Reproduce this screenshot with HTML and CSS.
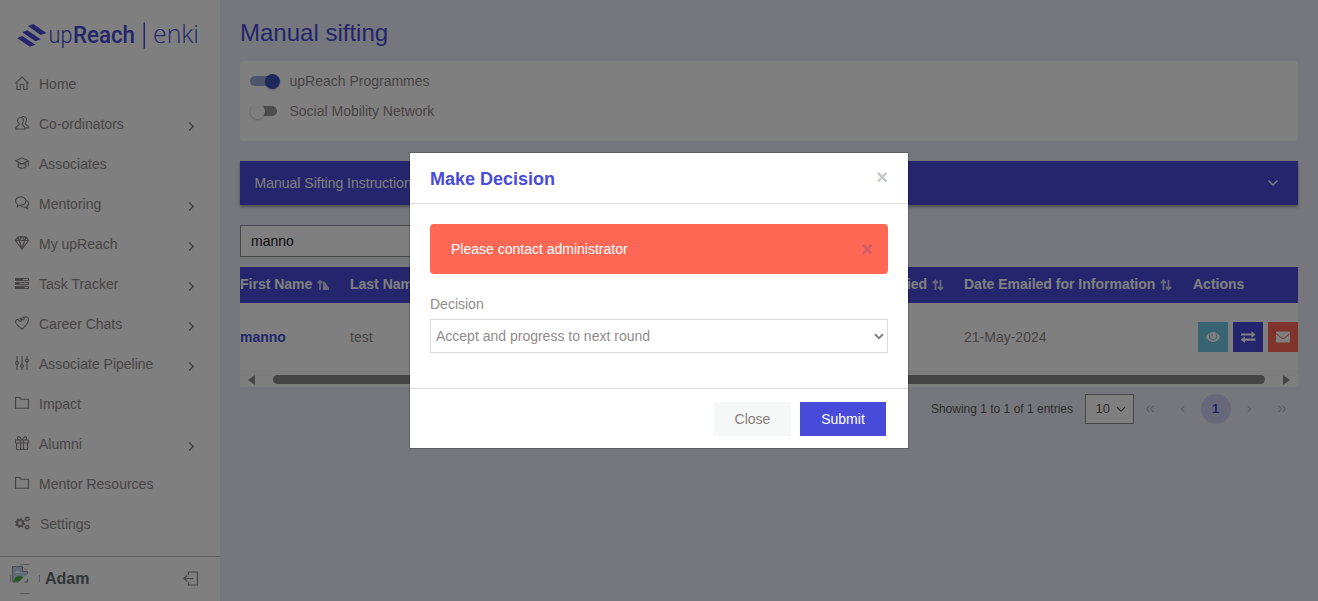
FILE: index.html
```html
<!DOCTYPE html>
<html lang="en">
<head>
<meta charset="utf-8">
<title>Manual sifting</title>
<link rel="stylesheet" href="styles.css">
</head>
<body>
<div class="app">
  <aside class="sidebar">
    <svg class="logo" width="220" height="64" viewBox="0 0 220 64">
      <g fill="#484bd9">
        <path d="M28 26L33.300 24L46.300 33L40.700 35Z"/>
        <path d="M22.300 32.300L27.300 30.300L40.700 39.300L35.300 41.300Z"/>
        <path d="M17 38L22.300 36L35.300 44.700L30 46.700Z"/>
        <rect x="143.500" y="22.500" width="1.500" height="26"/>
        <text class="logo-light" x="48.500" y="42.500" textLength="24" lengthAdjust="spacingAndGlyphs">up</text>
        <text class="logo-bold" x="73" y="42.500" textLength="62" lengthAdjust="spacingAndGlyphs">Reach</text>
        <text class="logo-enki" x="153" y="43" textLength="46" lengthAdjust="spacingAndGlyphs">enki</text>
      </g>
    </svg>
    <nav class="menu">
      <a class="item"><svg class="ico" viewBox="0 0 14 14"><path d="M.5 7.500L7 .800L13.500 7.500M2 6v7.500h3.300V8.500h3.400v5H12V6"/></svg><span>Home</span></a>
      <a class="item"><svg class="ico" viewBox="0 0 14 14"><path d="M5.500 1.500C3.700 1.500 2.300 3 2.600 5c.3 1.600 1.600 2.300 1.600 3.200C4.200 9.700.8 10 .6 13h9.800C10.200 10 7 9.700 7 8.200c0-.9 1.300-1.600 1.500-3.200.3-2-1.200-3.500-3-3.500zM6.500.8c3.500-1 5.500 1.200 5 3.700-.3 1.500-1.300 2-1.300 3 0 1.700 3.300 1.200 3.300 4.300h-2.500"/></svg><span>Co-ordinators</span><i class="chev"></i></a>
      <a class="item"><svg class="ico" viewBox="0 0 14 14"><path d="M7 1.800L.7 4.800 7 7.900l6.300-3.100zM3.200 6.200v4.500c2.500 2 5.100 2 7.600 0V6.200M13.300 5v5.500M3.200 8.500C5 7.500 9 7.500 10.800 8.500"/></svg><span>Associates</span></a>
      <a class="item"><svg class="ico" viewBox="0 0 14 14"><path d="M5.500.8C2.700.8.5 2.500.5 5c0 1.600.8 2.800 2.200 3.600L2.300 11l2.200-1.700c3.600.4 6.400-1.500 6.400-4.300C10.900 2.500 8.400.8 5.500.8zM11.500 4.500c3 1.500 2.500 4.800.4 6.100l.6 2-2.300-1.400c-2.200.3-3.700-.3-4.700-1.700"/></svg><span>Mentoring</span><i class="chev"></i></a>
      <a class="item"><svg class="ico" viewBox="0 0 14 14"><path d="M3 .8h8l2.500 3.700L7 13.300.5 4.500zM.5 4.500h13M3 .8l1.300 3.700L7 13l2.700-8.500L11 .8M4.300 4.500L7 .8l2.700 3.700"/></svg><span>My upReach</span><i class="chev"></i></a>
      <a class="item"><svg class="ico solid" viewBox="0 0 14 14"><path fill-rule="evenodd" d="M0 2h14v3H0zM8 3v1h5V3zM0 6h14v3H0zM4.500 7v1H13V7zM0 10h14v3H0zM9.500 11v1H13v-1z"/></svg><span>Task Tracker</span><i class="chev"></i></a>
      <a class="item"><svg class="ico" viewBox="0 0 14 14"><path d="M7 13.400L1.200 7.600C-.3 5.800.8 3 3.200 3.400l1.500 1.800c1.400.4 2-.6 1.400-1.700L4.500 2.400M5.600 1.600l2.300 2.200c1.200.4 1.700-.6 1.300-1.600L7.500.8M9.300 1.200c2-.9 4.200.2 4.200 2.500C13.500 6.600 10 10.500 7 13.400"/></svg><span>Career Chats</span><i class="chev"></i></a>
      <a class="item"><svg class="ico" viewBox="0 0 14 14"><path d="M2 0v5.500M2 8.500V14M7 0v8.500M7 11.500V14M12 0v3M12 6v8"/><circle cx="2" cy="7" r="1.400"/><circle cx="7" cy="10" r="1.400"/><circle cx="12" cy="4.500" r="1.400"/></svg><span>Associate Pipeline</span><i class="chev"></i></a>
      <a class="item"><svg class="ico" viewBox="0 0 14 14"><path d="M.5 1.500h4.300l1 1.700h7.700v9H.5z"/></svg><span>Impact</span></a>
      <a class="item"><svg class="ico" viewBox="0 0 14 14"><path d="M.5 4h13v3H.5zM1.500 7v6.500h11V7M5.500 4v9.500M8.500 4v9.500M7 4C5 .2 2.500-.2 2.500 2c0 1 .8 2 2 2M7 4c2-3.800 4.500-4.200 4.500-2 0 1-.8 2-2 2"/></svg><span>Alumni</span><i class="chev"></i></a>
      <a class="item"><svg class="ico" viewBox="0 0 14 14"><path d="M.5 1.500h4.300l1 1.700h7.700v9H.5z"/></svg><span>Mentor Resources</span></a>
      <a class="item"><svg class="ico gears" viewBox="0 0 15 14"><circle cx="5" cy="7" r="3" stroke-width="2.200"/><circle cx="5" cy="7" r="4.400" stroke-width="1.300" stroke-dasharray="1.700 1.755"/><circle cx="12.200" cy="3" r="1.600" stroke-width="1.400"/><circle cx="12.200" cy="3" r="2.300" stroke-width=".8" stroke-dasharray="1.100 .706"/><circle cx="12.200" cy="11.200" r="1.600" stroke-width="1.400"/><circle cx="12.200" cy="11.200" r="2.300" stroke-width=".8" stroke-dasharray="1.100 .706"/></svg><span>Settings</span></a>
    </nav>
    <div class="user">
      <svg class="avatar" width="30" height="30" viewBox="0 0 30 30">
        <path d="M10 .5h9.500M10 29.500h9.500M.5 11v7M29.500 11v7" fill="none" stroke="#a5a5a5" stroke-width=".8"/>
        <path d="M2.500 2.500h10l5 5v10.500h-15z" fill="#c5d7f5" stroke="#999"/>
        <path d="M12.500 2.500v5h5" fill="#fff" stroke="#999"/>
        <path d="M5 8.500q1.500-2.500 3.500-1 2-.5 2 1.500H5z" fill="#fff"/>
        <path d="M3 17.500q3-6 7-6l3 2-3 4z" fill="#4caf3c"/>
        <path d="M18.300 9L8 18.700h5.500l4.800-4.700z" fill="#fff"/>
      </svg>
      <b>Adam</b>
      <svg class="logout" width="16" height="16" viewBox="0 0 16 16"><path d="M5.500 4V1h9v13h-9V11M1 7.500h9M4 4.500l-3 3 3 3"/></svg>
    </div>
  </aside>

  <main class="main">
    <h1>Manual sifting</h1>
    <section class="panel">
      <label class="toggle on"><span class="track"><i></i></span>upReach Programmes</label>
      <label class="toggle"><span class="track"><i></i></span>Social Mobility Network</label>
    </section>
    <section class="accordion"><span>Manual Sifting Instructions</span>
      <svg width="12" height="8" viewBox="0 0 12 8"><path d="M1.500 1.500L6 6l4.500-4.500"/></svg>
    </section>
    <div class="search">manno</div>
    <section class="table">
      <div class="row head">
        <span>First Name <svg class="sort" viewBox="0 0 12 12"><path d="M3 11V2M.8 4.200L3 2l2.200 2.200"/><path fill="#d0d1f5" stroke="none" d="M5.800 2.500h1.700L12 9v2H5.800z"/></svg></span>
        <span>Last Name</span>
        <span class="applied">Date Applied <svg class="sort" viewBox="0 0 12 12"><path d="M3.500 11V1.500M1 4l2.500-2.500L6 4M8.500 1v9.500M6 8l2.500 2.500L11 8"/></svg></span>
        <span>Date Emailed for Information <svg class="sort" viewBox="0 0 12 12"><path d="M3.500 11V1.500M1 4l2.500-2.500L6 4M8.500 1v9.500M6 8l2.500 2.500L11 8"/></svg></span>
        <span>Actions</span>
      </div>
      <div class="row data">
        <b>manno</b>
        <span>test</span>
        <span class="applied">21-Oct-2022</span>
        <span>21-May-2024</span>
        <div class="actions">
          <i class="act view"><svg width="16" height="12" viewBox="0 0 16 12"><path fill="#fff" d="M.8 6q3-5 7.200-5t7.200 5q-3 5-7.200 5T.8 6z"/><path fill="none" stroke="#70c6e6" stroke-width=".9" d="M5 2.700Q3.400 5 4.800 7.500M11 2.700Q12.600 5 11.200 7.500Q8 10.500 4.800 7.500M6.300 5.500Q6.400 3.800 8 3.700"/></svg></i>
          <i class="act swap"><svg width="16" height="12" viewBox="0 0 16 12"><path fill="#fff" d="M1 2.600h10.500V.3l4 3.300-4 3.300V4.600H1zM15.500 7.600H5V5.500L.6 8.700 5 12V9.700h10.500z"/></svg></i>
          <i class="act mail"><svg width="16" height="12" viewBox="0 0 16 12"><rect x="1" y=".5" width="14" height="11" rx=".8" fill="#fff"/><path d="M1 2.500q3.500 3 5.500 4.500 1.500 1 3 0 2-1.500 5.500-4.500" fill="none" stroke="#ff6755"/></svg></i>
        </div>
      </div>
      <div class="scroll">
        <i class="arrow left"></i><i class="thumb"></i><i class="arrow right"></i>
      </div>
    </section>
    <div class="pager">
      <span class="count">Showing 1 to 1 of 1 entries</span>
      <span class="size">10 <svg width="10" height="7" viewBox="0 0 10 7"><path d="M1 1.200L5 5.200l4-4"/></svg></span>
      <svg class="nav" viewBox="0 0 12 10"><path d="M5.500 1.800L2.500 5l3 3.200M9.500 1.800L6.500 5l3 3.200"/></svg>
      <svg class="nav" viewBox="0 0 12 10"><path d="M7.500 1.800L4.500 5l3 3.200"/></svg>
      <b class="page">1</b>
      <svg class="nav" viewBox="0 0 12 10"><path d="M4.500 1.800L7.500 5l-3 3.200"/></svg>
      <svg class="nav" viewBox="0 0 12 10"><path d="M2.500 1.800L5.500 5l-3 3.200M6.500 1.800L9.500 5l-3 3.200"/></svg>
    </div>
  </main>
</div>

<div class="backdrop">
  <div class="modal">
    <header class="modal-head"><h2>Make Decision</h2><span class="close">×</span></header>
    <div class="modal-body">
      <div class="alert"><span>Please contact administrator</span><span class="close">×</span></div>
      <label class="field">Decision</label>
      <div class="select">Accept and progress to next round
        <svg width="10" height="7" viewBox="0 0 10 7"><path d="M1 1.200L5 5.200l4-4"/></svg>
      </div>
    </div>
    <footer class="modal-foot"><button class="btn">Close</button><button class="btn primary">Submit</button></footer>
  </div>
</div>
</body>
</html>
```
FILE: styles.css
```css
* { box-sizing: border-box; }
body {
  margin: 0;
  height: 601px;
  overflow: hidden;
  font: 14px/20px "Liberation Sans", Arial, sans-serif;
  color: #918b8c;
  background: #eceef8;
}
h1, h2 { margin: 0; color: #484bd9; }
svg { display: block; fill: none; stroke: none; }

.app { display: flex; height: 601px; }

/* Sidebar */
.sidebar {
  display: flex;
  flex-direction: column;
  width: 220px;
  background: #fff;
}
.logo { flex: none; }
.logo-light { font: 300 23px Roboto, sans-serif; }
.logo-bold { font: 500 23.500px Roboto, sans-serif; }
.logo-enki { font: 300 26px "Open Sans", sans-serif; }
.menu { flex: 1; }
.item {
  display: flex;
  align-items: center;
  height: 40px;
  padding: 0 25px 0 15px;
}
.ico {
  width: 14px;
  height: 14px;
  margin: -2px 10px 0 0;
  stroke: #918b8c;
  stroke-width: 1.150;
  overflow: visible;
}
.ico.solid { fill: #918b8c; stroke: none; }
.ico.gears { width: 15px; }
.chev {
  width: 5px;
  height: 5px;
  margin: 4px 3px 0 auto;
  border: solid #858081;
  border-width: 1px 1px 0 0;
  transform: rotate(45deg) scale(1.300);
}
.user {
  display: flex;
  align-items: center;
  height: 45px;
  padding: 0 21px 0 10px;
  border-top: 1px solid #c3c3c7;
  color: #5f6c72;
  font-size: 16px;
}
.user b { margin-left: 5px; }
.logout { margin-left: auto; stroke: #918b8c; stroke-width: 1.200; }

/* Main content */
.main { flex: 1; padding: 16px 20px 0; }
h1 { font-size: 24px; line-height: 34px; font-weight: 400; }
.panel {
  height: 80px;
  margin-top: 11px;
  padding: 5px 10px;
  border-radius: 3px;
  background: #fff;
}
.toggle { display: flex; align-items: center; height: 30px; }
.track {
  width: 27px;
  height: 10px;
  margin-right: 12.500px;
  border-radius: 5px;
  background: #9c9a9b;
}
.track i {
  display: block;
  width: 15px;
  height: 15px;
  margin: -2px 0 0 0;
  border-radius: 50%;
  background: #fafafa;
  box-shadow: 0 1px 2px rgba(0, 0, 0, .25);
}
.on .track { background: #9fa8da; }
.on .track i { margin-left: 15px; background: #3f51b5; }
.accordion {
  display: flex;
  align-items: center;
  justify-content: space-between;
  height: 44px;
  margin-top: 20px;
  padding: 0 19px 0 14.500px;
  background: #484bd9;
  color: #fff;
  box-shadow: 0 2px 3px rgba(0, 0, 0, .35);
}
.accordion svg { stroke: #fff; stroke-width: 1.400; }
.search {
  width: 300px;
  height: 32px;
  margin-top: 20px;
  padding: 5px 10px;
  border: 1px solid #918b8c;
  background: #fff;
  color: #212121;
}
.table { margin-top: 10px; background: #fff; }
.row {
  display: grid;
  grid-template-columns: 110px 524px 90px 229px 105px;
  align-items: center;
}
.head {
  height: 36px;
  padding-bottom: 2px;
  background: #484bd9;
  color: #fff;
  font-weight: 700;
  white-space: nowrap;
}
.sort {
  display: inline-block;
  width: 12px;
  height: 12px;
  margin-left: 1px;
  vertical-align: -1.500px;
  stroke: #d0d1f5;
  stroke-width: 1.800;
}
.applied { justify-self: end; padding-right: 20px; }
.data .applied { padding-right: 44px; }
.data { height: 68px; }
.data b { color: #484bd9; }
.actions { display: flex; gap: 5px; padding-left: 5px; }
.act {
  display: grid;
  place-items: center;
  flex: none;
  width: 30px;
  height: 30px;
}
.view { background: #70c6e6; }
.swap { background: #484bd9; }
.mail { background: #ff6755; }
.scroll {
  display: flex;
  align-items: center;
  height: 16px;
  padding: 0 8px;
  border-top: 1px solid #f3f3f3;
  background: #fcfcfc;
}
.thumb {
  flex: 1;
  height: 9px;
  margin: 0 18px;
  border-radius: 5px;
  background: #8b8b8b;
}
.arrow { border: 5px solid transparent; }
.left { border-left: 0; border-right: 7px solid #8b8b8b; }
.right { border-right: 0; border-left: 7px solid #8b8b8b; }
.pager {
  display: flex;
  align-items: center;
  justify-content: flex-end;
  height: 30px;
  margin-top: 7px;
  padding-right: 10.500px;
  font-size: 12px;
  color: #5f5b5c;
}
.size {
  display: flex;
  align-items: center;
  justify-content: space-between;
  width: 49px;
  height: 30px;
  margin: 0 10px 0 11.500px;
  padding: 0 7px 0 10px;
  border: 1px solid #918b8c;
  background: #fff;
  font-size: 13px;
}
.size svg { stroke: #5f5b5c; stroke-width: 1.200; }
.nav { width: 12px; height: 10px; margin-right: 21px; stroke: #aaa9b5; }
.nav:last-child { margin-right: 0; }
.page {
  width: 30px;
  height: 30px;
  margin: 0 12px 0 -9px;
  border-radius: 50%;
  background: #cfd0f2;
  color: #484bd9;
  line-height: 30px;
  text-align: center;
}

/* Dialog */
.backdrop {
  position: absolute;
  inset: 0;
  padding-top: 152px;
  background: rgba(0, 0, 0, .5);
}
.modal {
  width: 500px;
  height: 297px;
  margin: 0 auto;
  border: 1px solid rgba(0, 0, 0, .2);
  background: #fff;
  background-clip: padding-box;
}
.modal-head {
  display: flex;
  justify-content: space-between;
  height: 51px;
  padding: 16px 20px 0;
  border-bottom: 1px solid #dfdfe2;
}
h2 { font-size: 18px; line-height: 20px; }
.close { color: #c8c8c8; font-size: 20px; font-weight: 700; line-height: 16px; }
.modal-body { height: 184px; padding: 20px 20px 0; }
.alert {
  display: flex;
  align-items: center;
  justify-content: space-between;
  height: 50px;
  padding: 0 15px 0 21px;
  border-radius: 4px;
  background: #ff6755;
  color: #fff;
}
.alert .close { color: #d45d6b; }
.field { display: block; margin-top: 20px; }
.select {
  display: flex;
  align-items: center;
  justify-content: space-between;
  height: 34px;
  margin-top: 5px;
  padding: 0 3px 0 5px;
  border: 1px solid #d9d9dc;
}
.select svg { stroke: #858081; stroke-width: 2; }
.modal-foot {
  display: flex;
  justify-content: flex-end;
  gap: 9px;
  height: 60px;
  padding: 13px 22px 0;
  border-top: 1px solid #dcdce6;
}
.btn {
  width: 77px;
  height: 34px;
  padding: 0;
  border: 0;
  background: #f5f8f7;
  color: #858081;
  font: inherit;
}
.primary { width: 86px; background: #484bd9; color: #fff; }
```
